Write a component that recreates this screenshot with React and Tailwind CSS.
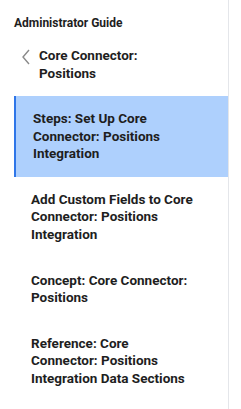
import React from 'react';

const items = [
  { title: 'Steps: Set Up Core Connector: Positions Integration', active: true },
  { title: 'Add Custom Fields to Core Connector: Positions Integration' },
  { title: 'Concept: Core Connector: Positions' },
  { title: 'Reference: Core Connector: Positions Integration Data Sections' },
];

export default function App() {
  return (
    <div
      className="w-[241px] h-[409px] bg-white overflow-hidden"
      style={{ fontFamily: 'Roboto, "Liberation Sans", sans-serif' }}
    >
      <div className="w-[229px] h-full border-r border-[#e4e6ea] pt-[15px]">
        <p className="pl-[14px] text-[12px] leading-[16px] font-bold text-[#1e1e1e]">Administrator Guide</p>

        {/* back link */}
        <div className="flex items-start mt-[15px] pl-[21px]">
          <svg width="10" height="16" viewBox="0 0 10 16" className="mt-[3px] shrink-0">
            <path d="M8 1 L2 8 L8 15" fill="none" stroke="#8a8a8a" strokeWidth="1.4" />
          </svg>
          <p className="ml-[8px] w-[150px] text-[13.5px] leading-[18px] font-bold text-[#1e1e1e]">
            Core Connector: Positions
          </p>
        </div>

        <nav className="mt-[14px] ml-[14px]">
          {items.map((item, i) => (
            <div
              key={i}
              className={
                item.active
                  ? 'bg-[#aed0fd] border-l-2 border-[#2f76e8] pl-[17px] py-[14px]'
                  : 'pl-[17px] py-[14px]'
              }
            >
              <p className="w-[164px] text-[13.5px] leading-[17.6px] font-bold text-[#1e1e1e]">{item.title}</p>
            </div>
          ))}
        </nav>
      </div>
    </div>
  );
}
